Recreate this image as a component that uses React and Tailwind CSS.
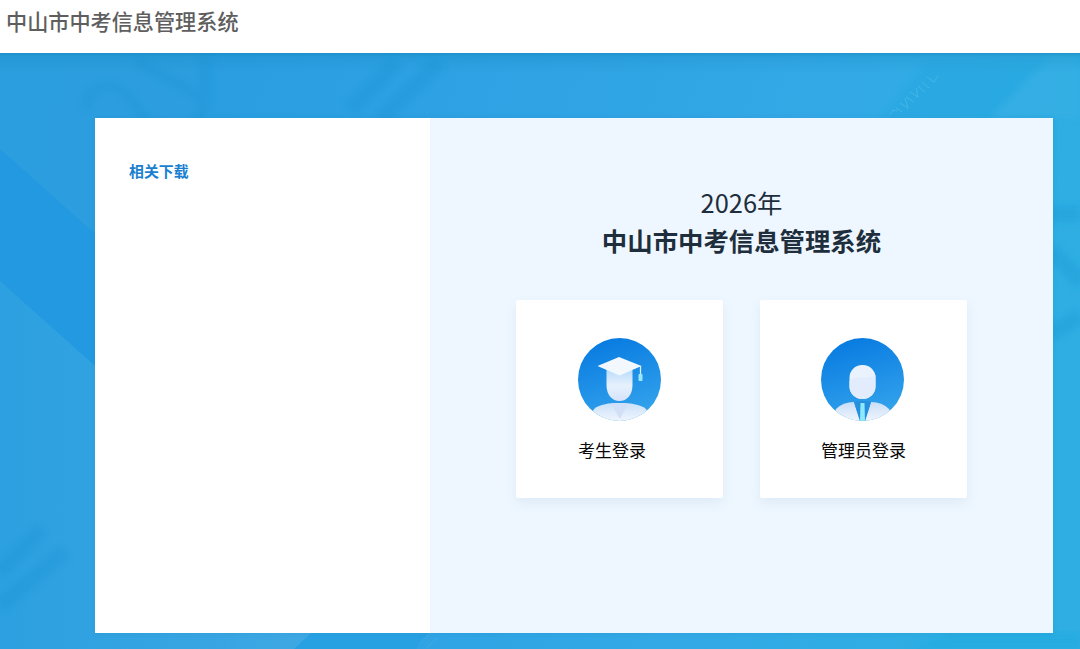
function Backdrop() {
  return (
    <svg className="absolute inset-0 h-full w-full" viewBox="0 53 1080 596" preserveAspectRatio="none" aria-hidden="true">
      <defs>
        <linearGradient id="sky" x1="0" y1="0" x2="1" y2="0.15">
          <stop offset="0" stopColor="#269ade" />
          <stop offset="0.5" stopColor="#2fa3e4" />
          <stop offset="0.75" stopColor="#33a9e6" />
          <stop offset="1" stopColor="#2eaee3" />
        </linearGradient>
        <linearGradient id="headerShade" x1="0" y1="0" x2="0" y2="1">
          <stop offset="0" stopColor="#0f80b4" stopOpacity="0.5" />
          <stop offset="0.2" stopColor="#1488bf" stopOpacity="0.25" />
          <stop offset="1" stopColor="#1488bf" stopOpacity="0" />
        </linearGradient>
        <linearGradient id="lowerLeft" x1="0" y1="0" x2="1" y2="0">
          <stop offset="0" stopColor="#2ca0e0" />
          <stop offset="1" stopColor="#40a9e4" />
        </linearGradient>
        <filter id="soft"><feGaussianBlur stdDeviation="3" /></filter>
      </defs>
      <rect y="53" width="1080" height="596" fill="url(#sky)" />
      <path d="M0 53V150L95 234L210 335V53Z" fill="#2d9fdf" opacity="0.75" />
      <path d="M0 149L95 234V366L0 281Z" fill="#2299e0" />
      <path d="M0 281L95 366L350 590L300 649H0Z" fill="url(#lowerLeft)" />
      <path d="M312 632H430L416 649H294Z" fill="#27a1e2" />
      <path d="M418 645L430 633M426 648L437 638" stroke="#65b8e8" strokeWidth="1" opacity="0.35" />
      <g filter="url(#soft)" fill="none" stroke="#1690d2" opacity="0.27">
        <path d="M88 110Q83 95 100 88Q120 82 132 100L146 120" strokeWidth="9" />
        <path d="M137 62L193 92Q210 105 196 120M205 55V110" strokeWidth="11" />
        <path d="M350 110L396 63M380 119L440 62" strokeWidth="15" />
        <path d="M0 572L42 529M0 606L65 551" strokeWidth="15" />
        <path d="M1049 214H1080M1050 250L1082 282M1050 334L1080 316" strokeWidth="16" />
      </g>
      <path d="M880 118L925 65H1045L990 118Z" fill="#20a5df" opacity="0.45" filter="url(#soft)" />
      <path d="M990 118L1052 53H1080V118Z" fill="#3cb1e4" opacity="0.4" filter="url(#soft)" />
      <path d="M890 115L893 110L897 111M896 108L902 112M900 103L908 108L905 98M906 97L914 102M910 92L918 97L916 88M918 86L925 92M922 82L929 88M927 77L934 82L938 76" fill="none" stroke="#81ccef" opacity="0.32" />
      <path d="M910 649L952 633H1080V649Z" fill="#20aadf" opacity="0.65" filter="url(#soft)" />
      <rect y="53" width="1080" height="20" fill="url(#headerShade)" />
    </svg>
  )
}

function StudentIcon() {
  return (
    <svg className="block size-[83px]" viewBox="0 0 83 83" aria-hidden="true">
      <defs>
        <linearGradient id="studentBg" x1="0.35" y1="0" x2="0.65" y2="1">
          <stop offset="0" stopColor="#087be1" />
          <stop offset="1" stopColor="#35a5ec" />
        </linearGradient>
        <linearGradient id="studentFace" x1="0" y1="0" x2="0" y2="1">
          <stop offset="0" stopColor="#b9dcfa" />
          <stop offset="0.5" stopColor="#e7f1fd" />
          <stop offset="1" stopColor="#d5e2fa" />
        </linearGradient>
        <linearGradient id="studentBody" x1="0" y1="0" x2="0" y2="1">
          <stop offset="0" stopColor="#cbe1f9" />
          <stop offset="1" stopColor="#f0f5fd" />
        </linearGradient>
        <clipPath id="studentClip"><circle cx="41.5" cy="41.5" r="41.5" /></clipPath>
      </defs>
      <g clipPath="url(#studentClip)">
        <rect width="83" height="83" fill="url(#studentBg)" />
        <path d="M10 83L16 71C22 66 31 65 41.5 65S62 66 68 71L73 83Z" fill="url(#studentBody)" />
        <path d="M33 65.5L42 81L50 65.5Z" fill="#d2dff7" />
        <path d="M28.5 32H54.5V47C54.5 57 49 63 41.5 63S28.5 57 28.5 47Z" fill="url(#studentFace)" />
      </g>
      <path d="M19.5 28L41 19L63.5 28L41.5 37.5Z" fill="#f3f8ff" />
      <path d="M62.5 28V37" fill="none" stroke="#d7effc" strokeWidth="1.3" />
      <rect x="60.5" y="36" width="4" height="7" rx="0.8" fill="#97e7fa" />
    </svg>
  )
}

function AdminIcon() {
  return (
    <svg className="block size-[83px]" viewBox="0 0 83 83" aria-hidden="true">
      <defs>
        <linearGradient id="adminBg" x1="0.35" y1="0" x2="0.65" y2="1">
          <stop offset="0" stopColor="#087be1" />
          <stop offset="1" stopColor="#35a5ec" />
        </linearGradient>
        <linearGradient id="adminBody" x1="0" y1="0" x2="0" y2="1">
          <stop offset="0" stopColor="#c8def7" />
          <stop offset="1" stopColor="#f1f5fd" />
        </linearGradient>
        <clipPath id="adminClip"><circle cx="41.5" cy="41.5" r="41.5" /></clipPath>
      </defs>
      <g clipPath="url(#adminClip)">
        <rect width="83" height="83" fill="url(#adminBg)" />
        <path d="M10 83L15 71Q22 64 33 64L39 83Z" fill="url(#adminBody)" />
        <path d="M73 83L68 71Q61 64 50 64L44 83Z" fill="url(#adminBody)" />
        <path d="M33 64L39 83H44L50 64L46 63H37Z" fill="#278fdf" />
        <path d="M39.5 65H43.5L44 83H39Z" fill="#8eeafa" />
        <rect x="28.5" y="27" width="26" height="34" rx="12.5" fill="#eaf2fe" />
        <path d="M28.5 43C38 35 43 43 54.5 37V48.5C54.5 55.4 48.9 61 42 61H41C34.1 61 28.5 55.4 28.5 48.5Z" fill="#e2ecfd" />
      </g>
    </svg>
  )
}

function LoginCard({ icon, label, inset }) {
  return (
    <button type="button" className={`flex h-[198px] w-[207px] flex-col items-start rounded-[2px] bg-white pt-[38px] shadow-[0_5px_12px_rgba(75,125,170,0.10)] ${inset}`}>
      {icon}
      <span className="mt-[16px] whitespace-nowrap text-[17px] leading-[25px] text-[#080808]">{label}</span>
    </button>
  )
}

export default function App() {
  return (
    <div className="flex h-[649px] w-[1080px] flex-col overflow-hidden bg-white font-['Noto_Sans_CJK_SC',sans-serif]">
      <header className="h-[53px] shrink-0 pl-[6px] pt-[5px]">
        <h1 className="text-[21.15px] font-medium leading-[32px] text-[#5e5e5e]">中山市中考信息管理系统</h1>
      </header>
      <div className="relative flex-1 pl-[95px] pt-[65px]">
        <Backdrop />
        <main className="relative flex h-[515px] w-[958px] shadow-[0_0_5px_rgba(20,120,180,0.18)]">
          <aside className="w-[335px] bg-white pl-[34px] pt-[41px]">
            <h2 className="text-[14.9px] font-bold leading-[24px] text-[#1a7fd0]">相关下载</h2>
          </aside>
          <section className="flex flex-1 flex-col items-center bg-[#eef7ff]">
            <div className="pt-[65px] text-center text-[25.4px] leading-[38px] text-[#1e2e3c]">
              <p>2026年</p>
              <p className="font-bold">中山市中考信息管理系统</p>
            </div>
            <div className="mt-[41px] flex gap-[37px]">
              <LoginCard icon={<StudentIcon />} label="考生登录" inset="pl-[62px]" />
              <LoginCard icon={<AdminIcon />} label="管理员登录" inset="pl-[61px]" />
            </div>
          </section>
        </main>
      </div>
    </div>
  )
}
